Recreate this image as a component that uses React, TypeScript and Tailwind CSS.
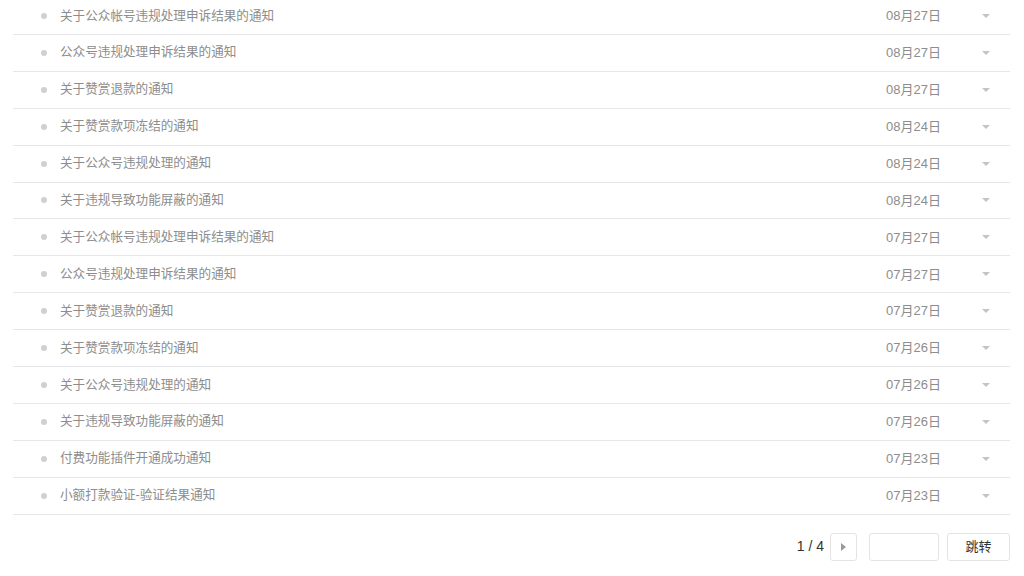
import { useState } from 'react';

const items = [
  { title: '关于公众帐号违规处理申诉结果的通知', date: '08月27日' },
  { title: '公众号违规处理申诉结果的通知', date: '08月27日' },
  { title: '关于赞赏退款的通知', date: '08月27日' },
  { title: '关于赞赏款项冻结的通知', date: '08月24日' },
  { title: '关于公众号违规处理的通知', date: '08月24日' },
  { title: '关于违规导致功能屏蔽的通知', date: '08月24日' },
  { title: '关于公众帐号违规处理申诉结果的通知', date: '07月27日' },
  { title: '公众号违规处理申诉结果的通知', date: '07月27日' },
  { title: '关于赞赏退款的通知', date: '07月27日' },
  { title: '关于赞赏款项冻结的通知', date: '07月26日' },
  { title: '关于公众号违规处理的通知', date: '07月26日' },
  { title: '关于违规导致功能屏蔽的通知', date: '07月26日' },
  { title: '付费功能插件开通成功通知', date: '07月23日' },
  { title: '小额打款验证-验证结果通知', date: '07月23日' },
];

export default function App() {
  const [page, setPage] = useState('');

  return (
    <div
      className="min-h-screen bg-white text-[12.6px] overflow-hidden"
      style={{ fontFamily: '"Liberation Sans", "Noto Sans CJK SC", sans-serif' }}
    >
      <ul className="mx-[13px] w-[997px] -mt-[2px]">
        {items.map((item, i) => (
          <li key={i} className="h-[36.92px] flex items-center border-b border-[#e7e7eb] text-[#8d8d8d]">
            <span className="w-[6px] h-[6px] rounded-full bg-[#d0d0d0] ml-[28px] mr-[13px]" />
            <span className="flex-1 truncate">{item.title}</span>
            <span className="whitespace-nowrap text-[13px]">{item.date}</span>
            <span className="w-[69px] flex justify-end pr-[20px]">
              <span className="w-0 h-0 border-x-[4px] border-x-transparent border-t-[4px] border-t-[#c4c4c4]" />
            </span>
          </li>
        ))}
      </ul>

      <div className="flex items-center justify-end mr-[14px] mt-[18px] h-[28px]">
        <span className="text-[#333] text-[14px] mr-[6px]">1 / 4</span>
        <button className="w-[27px] h-[28px] border border-[#e4e4e4] rounded-[3px] flex items-center justify-center">
          <span className="w-0 h-0 border-y-[4px] border-y-transparent border-l-[5px] border-l-[#999]" />
        </button>
        <input
          value={page}
          onChange={(e) => setPage(e.target.value)}
          className="ml-[12px] w-[70px] h-[28px] border border-[#e4e4e4] rounded-[3px] outline-none px-2 text-[#333]"
        />
        <button className="ml-[8px] w-[63px] h-[28px] border border-[#e4e4e4] rounded-[3px] text-[#333] text-[13px]">
          跳转
        </button>
      </div>
    </div>
  );
}
